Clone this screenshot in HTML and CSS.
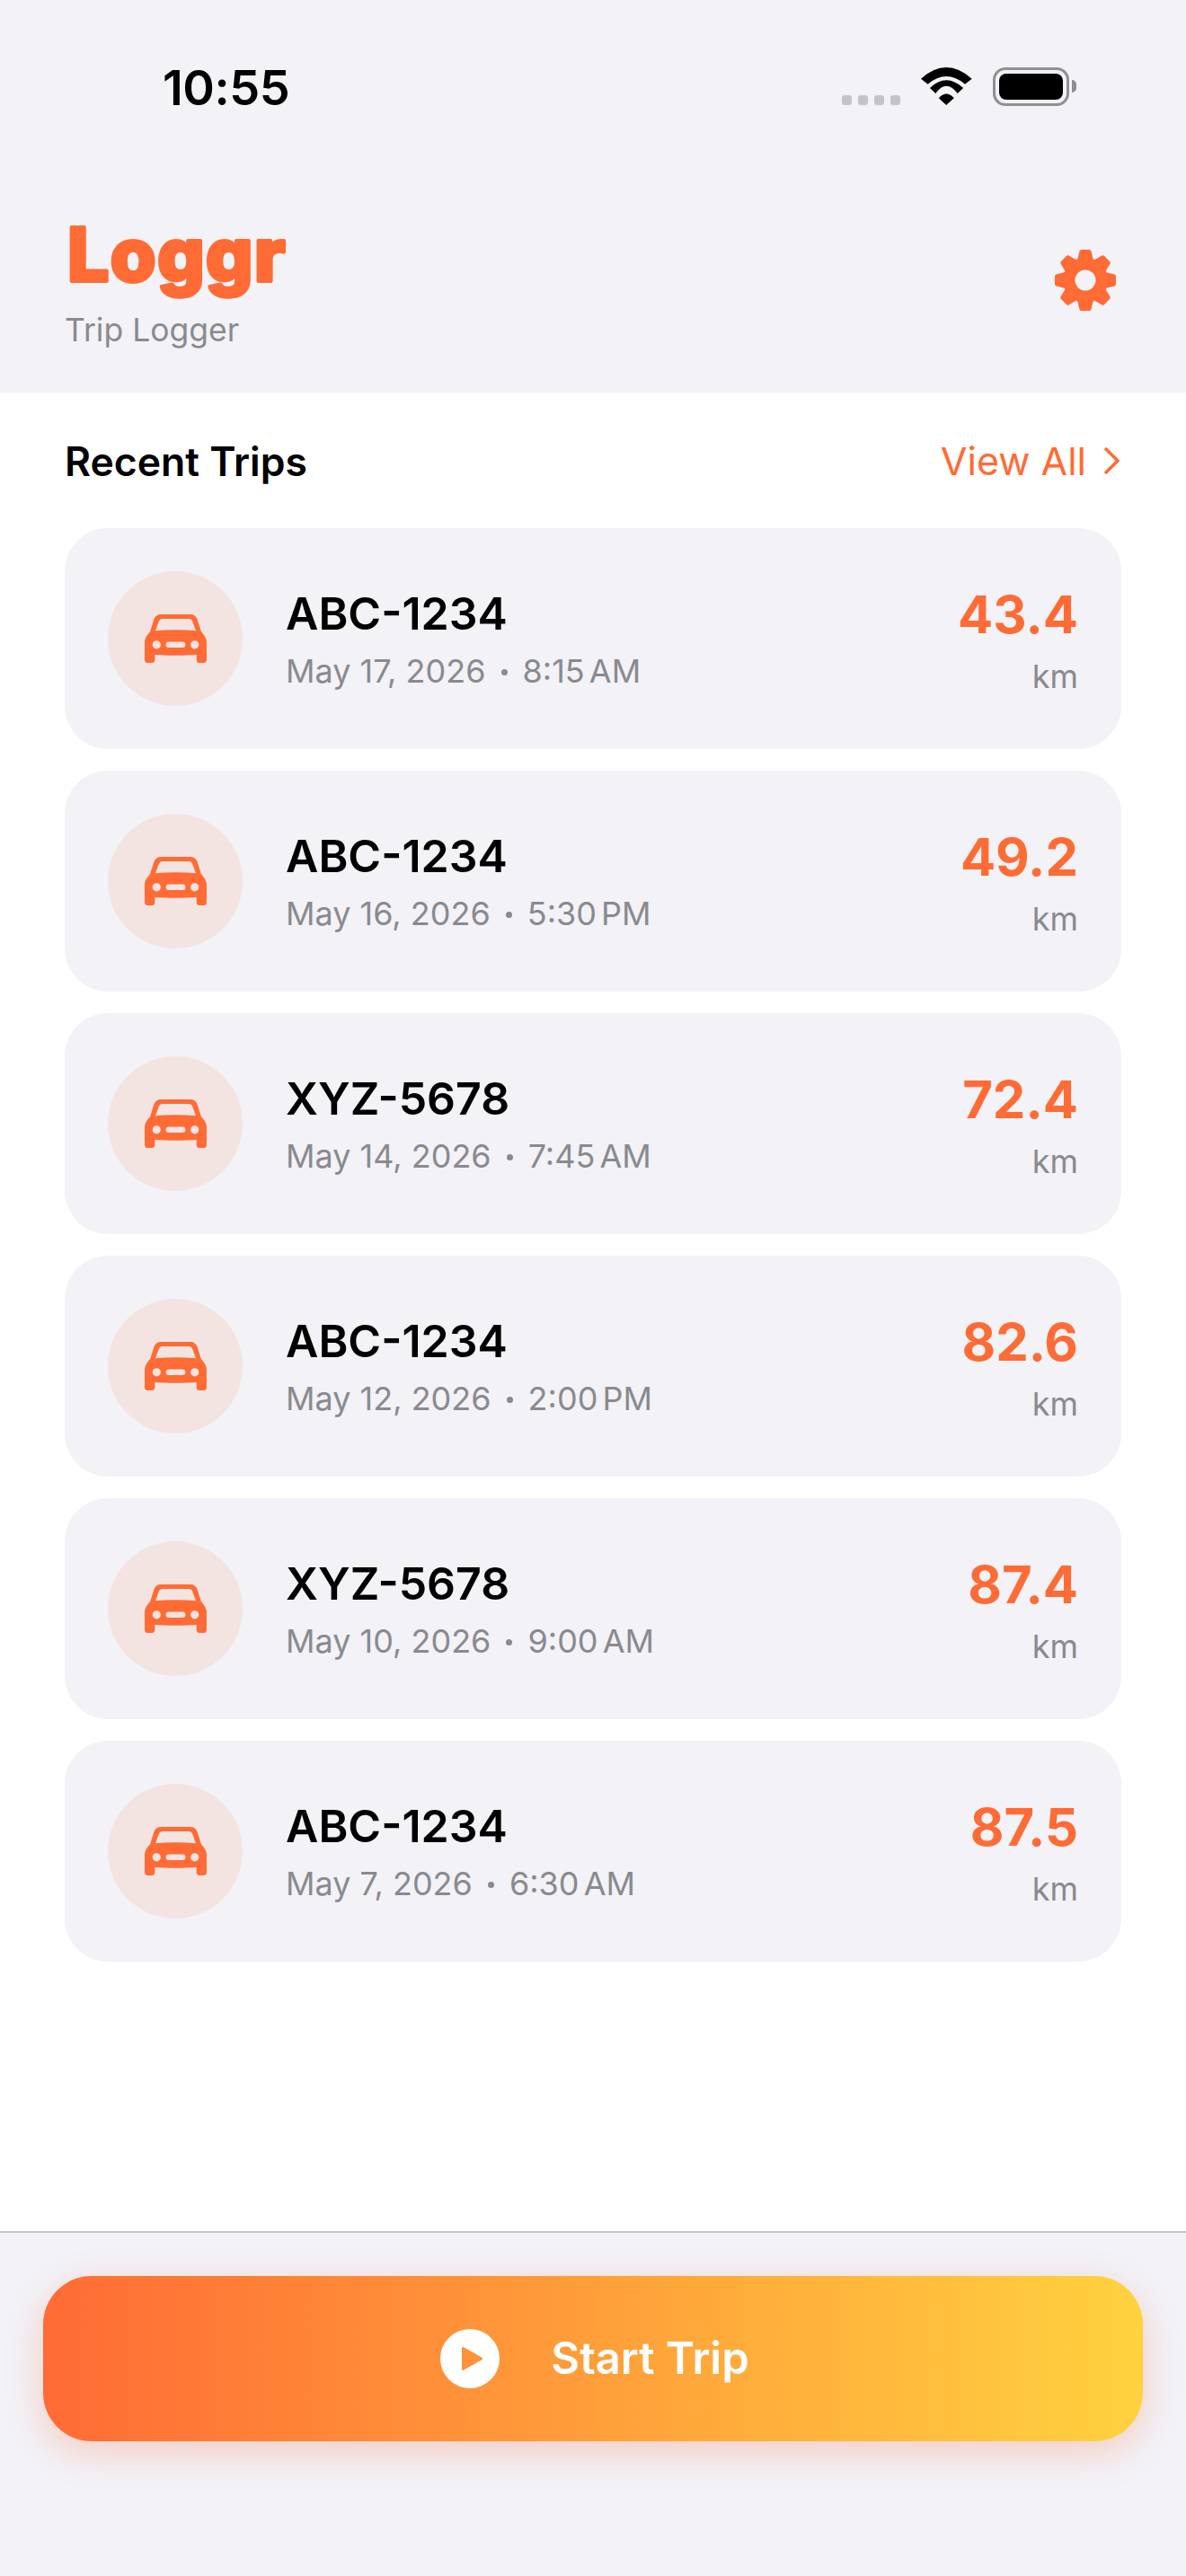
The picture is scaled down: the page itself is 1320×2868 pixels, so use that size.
FILE: index.html
```html
<!DOCTYPE html>
<html lang="en">
<head>
<meta charset="utf-8">
<title>Loggr</title>
<link rel="stylesheet" href="styles.css">
</head>
<body>
<svg class="defs" width="0" height="0" aria-hidden="true">
  <symbol id="car" viewBox="150 163 208 163">
    <path fill-rule="evenodd" d="M205 163H303C315 163 323 169 327 180L339 219C342 226 358 238 358 256V316C358 322 354 326 348 326H334C328 326 324 322 324 316V299C280 302 228 302 184 299V316C184 322 180 326 174 326H160C154 326 150 322 150 316V256C150 238 166 226 169 219L181 180C185 169 193 163 205 163ZM210 178C204 178 200 181 198 186L186 218C230 214 278 214 322 218L310 186C308 181 304 178 298 178ZM190 251A14 14 0 1 0 190 279A14 14 0 1 0 190 251ZM318 251A14 14 0 1 0 318 279A14 14 0 1 0 318 251ZM231 255A10 10 0 0 0 231 275H277A10 10 0 0 0 277 255Z"/>
  </symbol>
</svg>
<div class="app">
  <header class="top">
    <div class="status">
      <span class="clock">10:55</span>
      <div class="status-icons">
        <div class="dots"><i></i><i></i><i></i><i></i></div>
        <svg class="wifi" viewBox="435 75 172 126"><path d="M435 113Q520 37 606 113L583 131Q520 79 458 131Z"/><path d="M465 144Q520 92 577 144L558 162Q520 112 484 162Z"/><path d="M495 178Q520 150 546 178L520 201Z"/></svg>
        <div class="battery"><div class="battery-fill"></div></div>
        <div class="battery-nub"></div>
      </div>
    </div>
    <div class="brand-row">
      <div class="brand">
        <svg class="logo" viewBox="0 0 320 124"><text x="3" y="90">Loggr</text></svg>
        <div class="subtitle">Trip Logger</div>
      </div>
      <svg class="gear" viewBox="-34 -34 68 68">
        <g class="teeth">
          <path d="M-4.500 -32H4.500L7.500 -20H-7.500Z"/>
          <path transform="rotate(45)" d="M-4.500 -32H4.500L7.500 -20H-7.500Z"/>
          <path transform="rotate(90)" d="M-4.500 -32H4.500L7.500 -20H-7.500Z"/>
          <path transform="rotate(135)" d="M-4.500 -32H4.500L7.500 -20H-7.500Z"/>
          <path transform="rotate(180)" d="M-4.500 -32H4.500L7.500 -20H-7.500Z"/>
          <path transform="rotate(225)" d="M-4.500 -32H4.500L7.500 -20H-7.500Z"/>
          <path transform="rotate(270)" d="M-4.500 -32H4.500L7.500 -20H-7.500Z"/>
          <path transform="rotate(315)" d="M-4.500 -32H4.500L7.500 -20H-7.500Z"/>
        </g>
        <path fill-rule="evenodd" d="M0 -25A25 25 0 1 0 0 25A25 25 0 1 0 0 -25ZM0 -11.500A11.500 11.500 0 1 1 0 11.500A11.500 11.500 0 1 1 0 -11.500Z"/>
      </svg>
    </div>
  </header>
  <main class="content">
    <div class="section-head">
      <h2 class="section-title">Recent Trips</h2>
      <div class="view-all"><span>View All</span><svg class="chevron" viewBox="0 0 18 32"><path d="M2 2L16 16L2 30"/></svg></div>
    </div>
    <div class="trips">
      <div class="trip"><div class="trip-icon"><svg class="car"><use href="#car"/></svg></div><div class="trip-info"><div class="plate">ABC-1234</div><div class="when"><span>May 17, 2026</span><b class="sep"></b><span class="time">8:15 AM</span></div></div><div class="dist"><div class="value">43.4</div><div class="unit">km</div></div></div>
      <div class="trip"><div class="trip-icon"><svg class="car"><use href="#car"/></svg></div><div class="trip-info"><div class="plate">ABC-1234</div><div class="when"><span>May 16, 2026</span><b class="sep"></b><span class="time">5:30 PM</span></div></div><div class="dist"><div class="value">49.2</div><div class="unit">km</div></div></div>
      <div class="trip"><div class="trip-icon"><svg class="car"><use href="#car"/></svg></div><div class="trip-info"><div class="plate">XYZ-5678</div><div class="when"><span>May 14, 2026</span><b class="sep"></b><span class="time">7:45 AM</span></div></div><div class="dist"><div class="value">72.4</div><div class="unit">km</div></div></div>
      <div class="trip"><div class="trip-icon"><svg class="car"><use href="#car"/></svg></div><div class="trip-info"><div class="plate">ABC-1234</div><div class="when"><span>May 12, 2026</span><b class="sep"></b><span class="time">2:00 PM</span></div></div><div class="dist"><div class="value">82.6</div><div class="unit">km</div></div></div>
      <div class="trip"><div class="trip-icon"><svg class="car"><use href="#car"/></svg></div><div class="trip-info"><div class="plate">XYZ-5678</div><div class="when"><span>May 10, 2026</span><b class="sep"></b><span class="time">9:00 AM</span></div></div><div class="dist"><div class="value">87.4</div><div class="unit">km</div></div></div>
      <div class="trip"><div class="trip-icon"><svg class="car"><use href="#car"/></svg></div><div class="trip-info"><div class="plate">ABC-1234</div><div class="when"><span>May 7, 2026</span><b class="sep"></b><span class="time">6:30 AM</span></div></div><div class="dist"><div class="value">87.5</div><div class="unit">km</div></div></div>
    </div>
  </main>
  <footer class="bottom">
    <div class="start">
      <svg class="play" viewBox="0 0 66 66"><path fill-rule="evenodd" d="M33 0A33 33 0 1 0 33 66A33 33 0 1 0 33 0ZM24 21.500C24 20 25.500 19.500 26.500 20.500L46 31.500C47.500 32.500 47.500 33.500 46 34.500L26.500 45.500C25.500 46.500 24 46 24 44.500Z"/></svg>
      <span class="start-label">Start Trip</span>
    </div>
  </footer>
</div>
</body>
</html>
```

FILE: styles.css
```css
* { box-sizing: border-box; }
html, body { margin: 0; padding: 0; }
body { background: #fff; font-family: Inter, "Liberation Sans", sans-serif; color: #000; }
.defs { position: absolute; }
.app { width: 1320px; height: 2868px; display: flex; flex-direction: column; overflow: hidden; }

.top { height: 437px; background: #f2f2f7; display: flex; flex-direction: column; }
.status { height: 122px; padding: 68px 122px 0 181px; display: flex; justify-content: space-between; align-items: flex-start; }
.clock { font-size: 54px; line-height: 60px; font-weight: 600; letter-spacing: -0.5px; }
.status-icons { display: flex; align-items: flex-start; margin-top: 7px; }
.dots { display: flex; gap: 7px; margin-top: 31px; }
.dots i { width: 11px; height: 11px; border-radius: 3px; background: #c4c4c8; display: block; }
.wifi { width: 57px; height: 42px; margin-left: 23px; fill: #000; }
.battery { width: 85px; height: 43px; margin-left: 23px; border: 3px solid #909094; border-radius: 14px; padding: 4px; }
.battery-fill { width: 100%; height: 100%; background: #000; border-radius: 8px; }
.battery-nub { width: 5px; height: 14px; margin: 14px 0 0 3px; background: #8e8e92; border-radius: 0 5px 5px 0; }

.brand-row { display: flex; justify-content: space-between; align-items: flex-start; padding: 0 78px 0 72px; }
.brand { display: flex; flex-direction: column; }
.logo { width: 320px; height: 124px; margin-top: 101px; }
.logo text { font-family: Inter, sans-serif; font-size: 82px; font-weight: 800; letter-spacing: 1.500px; fill: #ff6b35; stroke: #ff6b35; stroke-width: 4px; stroke-linejoin: round; }
.subtitle { font-size: 35.500px; line-height: 44px; color: #8a8a8e; margin-top: -1px; }
.gear { width: 68px; height: 68px; margin-top: 156px; fill: #ff6b35; }
.teeth path { stroke: #ff6b35; stroke-width: 4px; stroke-linejoin: round; }

.content { flex: 1; background: #fff; padding: 0 72px; }
.section-head { height: 151px; padding-top: 50px; display: flex; justify-content: space-between; align-items: flex-start; }
.section-title { margin: 0; font-size: 44.500px; line-height: 54px; font-weight: 600; color: #000; }
.view-all { display: flex; align-items: center; gap: 19px; height: 52px; font-size: 43px; color: #ff6b35; padding-right: 2px; }
.chevron { width: 18px; height: 32px; fill: none; stroke: #ff6b35; stroke-width: 3.500px; }

.trips { display: flex; flex-direction: column; gap: 24px; }
.trip { height: 246px; background: #f2f2f7; border-radius: 48px; padding: 0 48px; display: flex; align-items: center; }
.trip-icon { width: 150px; height: 150px; border-radius: 50%; background: rgba(255, 107, 53, 0.1); display: flex; align-items: center; justify-content: center; flex: none; }
.car { width: 69px; height: 54px; fill: #ff6b35; }
.trip-info { flex: 1; margin-left: 48px; }
.plate { font-size: 50px; line-height: 58px; font-weight: 600; }
.when { font-size: 36px; line-height: 44px; color: #8a8a8e; display: flex; align-items: center; margin-top: 13px; }
.sep { width: 7px; height: 7px; border-radius: 50%; background: #8a8a8e; margin: 4px 17px 0; }
.time { word-spacing: -5px; }
.dist { display: flex; flex-direction: column; align-items: flex-end; }
.value { font-size: 58px; line-height: 72px; font-weight: 700; color: #ff6b35; }
.unit { font-size: 36px; line-height: 44px; color: #8a8a8e; margin-top: 11px; }

.bottom { height: 384px; flex: none; background: #f2f2f7; border-top: 2px solid #c6c6c8; padding: 48px 48px 0; }
.start { height: 184px; border-radius: 54px; background: linear-gradient(90deg, #ff6b35, #ffd23f); box-shadow: 0 12px 40px rgba(255, 107, 53, 0.28); display: flex; align-items: center; justify-content: center; gap: 57px; color: #fff; padding-left: 4px; }
.play { width: 66px; height: 66px; fill: #fff; }
.start-label { font-size: 49px; line-height: 60px; font-weight: 600; }
```
